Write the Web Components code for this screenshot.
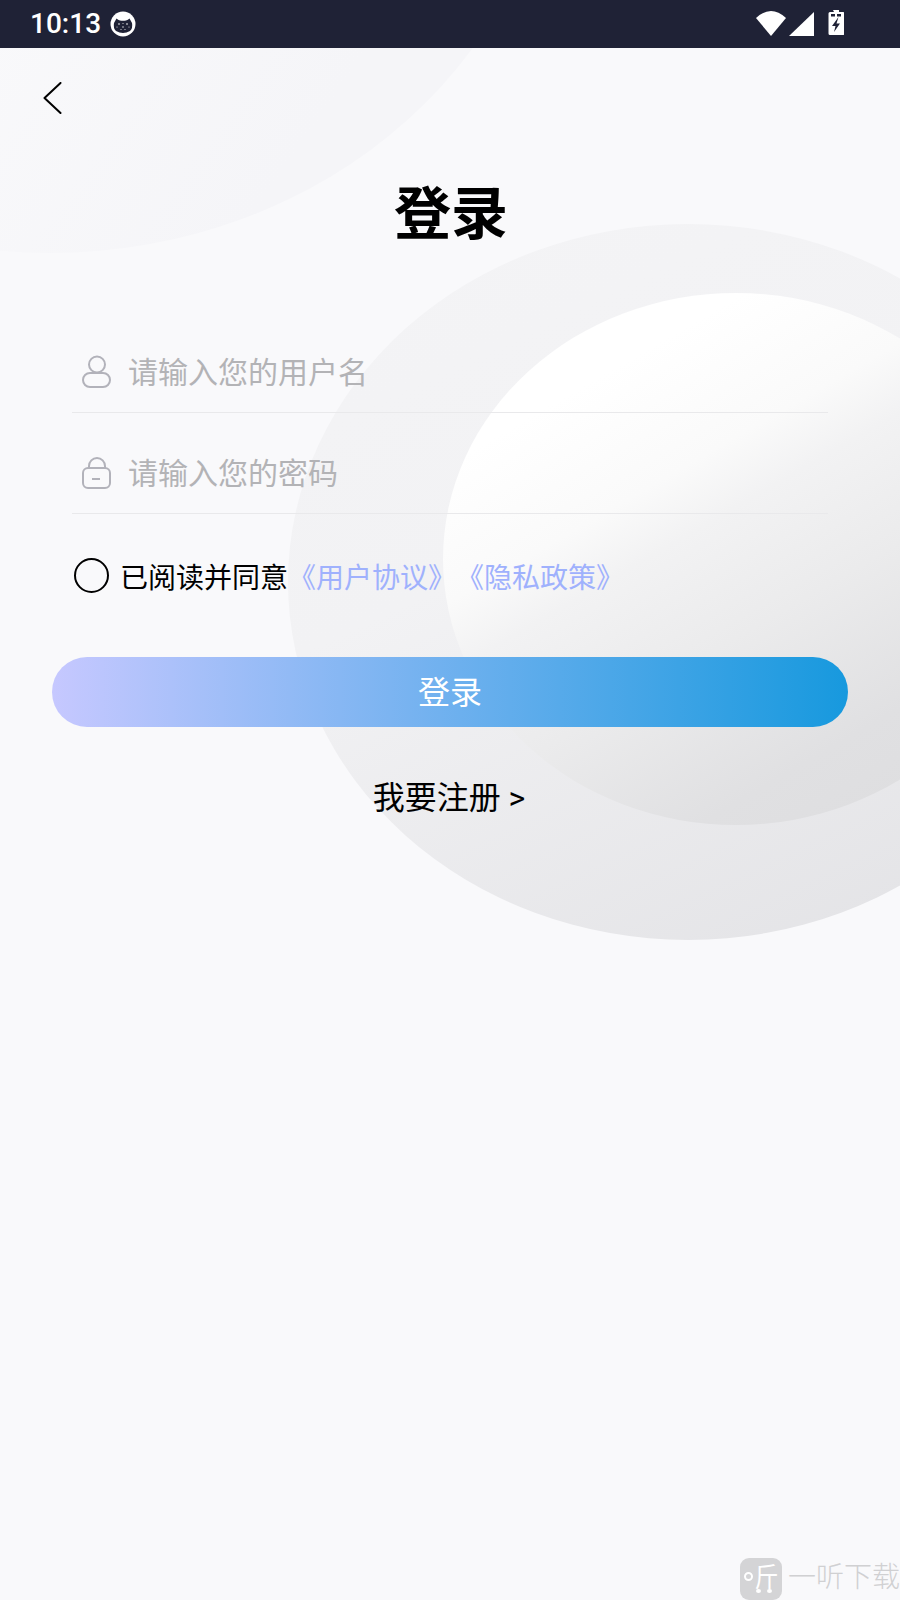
<!DOCTYPE html>
<html lang="zh"><head><meta charset="utf-8"><title>登录</title>
<style>
html,body{margin:0;padding:0;background:#f9f9fb}
body{font-family:Roboto,"Noto Sans CJK SC","Liberation Sans",sans-serif}
</style></head><body>
<login-page>
  <status-bar slot="status" time="10:13"></status-bar>
  <back-nav></back-nav>
  <page-title>登录</page-title>
  <text-field icon="user">请输入您的用户名</text-field>
  <text-field icon="lock">请输入您的密码</text-field>
  <agree-row><span>《用户协议》</span><span>《隐私政策》</span></agree-row>
  <gradient-button>登录</gradient-button>
  <register-link>我要注册 &gt;</register-link>
  <water-mark></water-mark>
</login-page>
<script>
function def(name, css, html, init){
  customElements.define(name, class extends HTMLElement{
    constructor(){super();const r=this.attachShadow({mode:'open'});r.innerHTML='<style>'+css+'</style>'+html;}
    connectedCallback(){ if(init) init.call(this,this.shadowRoot); }
  });
}
def('login-page',`
:host{display:block;position:relative;width:900px;height:1600px;overflow:hidden;background:#f9f9fb}
.blob{position:absolute;border-radius:50%}
.a{left:-455px;top:-653px;width:1010px;height:906px;background:linear-gradient(125deg,#f9f9fb 55%,#f5f5f8 80%,#f5f5f8 100%)}
.b{left:288px;top:224px;width:800px;height:716px;background:linear-gradient(155deg,#f4f4f6 0%,#f2f2f4 40%,#e1e1e4 100%)}
.c{left:443px;top:293px;width:586px;height:532px;background:linear-gradient(150deg,#fff 20%,#fafafa 36%,#f2f2f3 44%,#ebebec 59%,#e0e0e2 78%,#dcdcde 100%)}
.content{position:relative;display:flex;flex-direction:column;height:100%}
`,`
<div class="blob a"></div><div class="blob b"></div><div class="blob c"></div>
<div class="content"><slot name="status"></slot><slot></slot></div>`);

def('status-bar',`
:host{display:flex;align-items:center;height:48px;background:#1f2236;color:#fff;flex:none;font-family:Roboto,"Liberation Sans",sans-serif}
.t{margin-left:30px;font-size:28px;font-weight:500;line-height:48px}
.cat{margin-left:9px;display:block}
.r{margin-left:auto;margin-right:56px;display:block}
`,`
<span class="t">10:13</span>
<svg class="cat" width="26" height="26" viewBox="0 0 26 26"><circle cx="13" cy="13" r="12.5" fill="#fff"/>
<path d="M4 12 L6.500 7.500 Q8 9 10 9.500 Q13 10 16 9.500 Q18 9 19.500 7.500 L22 12 Q23 17 20 20 Q13 24 6 20 Q3 17 4 12Z" fill="#1f2236"/>
<g fill="#fff"><circle cx="9" cy="13" r=".8"/><circle cx="17" cy="13" r=".8"/><circle cx="13" cy="16" r=".7"/><circle cx="7" cy="16" r=".5"/><circle cx="19" cy="16" r=".5"/><circle cx="11" cy="18.500" r=".5"/><circle cx="15" cy="18.500" r=".5"/><circle cx="13" cy="12.500" r=".5"/></g></svg>
<svg class="r" width="88" height="48" viewBox="756 0 88 48">
<path d="M756 18 Q771 4 786 18 L771 36Z" fill="#fff"/>
<path d="M789 36 L814 12 V36Z" fill="#fff"/>
<path d="M833 10 h6 v2 h4 a1.5 1.5 0 0 1 1.5 1.5 V33.5 a1.5 1.5 0 0 1 -1.5 1.5 h-13 a1.5 1.5 0 0 1 -1.5 -1.5 V13.500 a1.500 1.500 0 0 1 1.500 -1.500 h4Z" fill="#fff"/>
<path d="M831 14h4v2.500h-4Zm6 0h4v2.500h-4Z" fill="#1f2236"/>
<path d="M838.500 17 L832 26 H835.500 L834 32 L840 23.500 H836.500Z" fill="#1f2236"/>
</svg>`);

def('back-nav',`
:host{display:block;height:30px;margin:34px 0 0 43px;flex:none}
svg{display:block}
`,`<svg width="20" height="32" viewBox="0 0 20 32"><path d="M17.500 1 L1.500 16 L17.500 31" fill="none" stroke="#000" stroke-width="2" stroke-linecap="round" stroke-linejoin="round"/></svg>`);

def('page-title',`
:host{display:block;text-align:center;font-size:57px;font-weight:700;color:#000;line-height:80px;margin:63px 0 57px;padding-left:2px;flex:none}
`,`<slot></slot>`);

def('text-field',`
:host{display:flex;align-items:center;height:84px;padding-top:16px;margin:0 72px;border-bottom:1px solid #e9e9eb;box-sizing:content-box;flex:none;color:#b3b3b6;font-size:30px}
svg{display:block;margin:2px 15px 0 9px;flex:none}
`,`<svg width="32" height="34" viewBox="0 0 32 34" fill="none" stroke="#b2b2ba" stroke-width="2"></svg><slot></slot>`,
function(r){
  const s=r.querySelector('svg');
  s.innerHTML = this.getAttribute('icon')==='user'
   ? '<circle cx="16" cy="10.500" r="8"/><rect x="2" y="19" width="27" height="14" rx="7"/>'
   : '<path d="M8 14 V11 a8 8 0 0 1 16 0 V14"/><rect x="2" y="13" width="27" height="20" rx="5"/><path d="M11 24 H19"/>';
});

def('agree-row',`
:host{display:flex;align-items:center;margin:44px 0 0 74px;font-size:28px;color:#000;height:36px;flex:none}
svg{display:block;margin:-2px 11px 0 0;flex:none}
.l{color:#9fb1fd;display:flex}
`,`<svg width="35" height="35" viewBox="0 0 35 35"><circle cx="17.500" cy="17.500" r="16.500" fill="none" stroke="#000" stroke-width="2"/></svg><span>已阅读并同意</span><span class="l"><slot></slot></span>`);

def('gradient-button',`
:host{display:flex;align-items:center;justify-content:center;height:66px;padding-bottom:4px;margin:63px 52px 0;border-radius:35px;background:linear-gradient(90deg,#c6c8ff,#1799de);color:#fff;font-size:32px;flex:none}
`,`<slot></slot>`);

def('register-link',`
:host{display:block;text-align:center;font-size:32px;color:#000;line-height:48px;margin:47px 0 0;padding-right:2px;flex:none}
`,`<slot></slot>`);

def('water-mark',`
:host{position:absolute;right:0;bottom:0;display:flex;align-items:center;width:160px;height:42px;color:#d0d0d2;font-size:28px;line-height:42px}
.i{position:relative;flex:none;width:42px;height:42px;border-radius:9px;background:#d4d4d6;color:#fff;margin-right:6px;display:flex;align-items:center;justify-content:center;font-size:24px;line-height:28px}
.o{width:5px;height:5px;border:2px solid #fff;border-radius:50%;margin:-6px 2px 0 0}
.g{display:block;transform:scaleY(1.15);margin-top:-3px}
.d{position:absolute;width:5px;height:4px;border-radius:50%;background:#fff;top:31px}
.t{white-space:nowrap;font-weight:300;position:relative;top:-1px}
`,`<span class="i"><span class="o"></span><span class="g">斤</span><span class="d" style="left:16px"></span><span class="d" style="left:27px"></span></span><span class="t">一听下载</span>`);
</script>
</body></html>
